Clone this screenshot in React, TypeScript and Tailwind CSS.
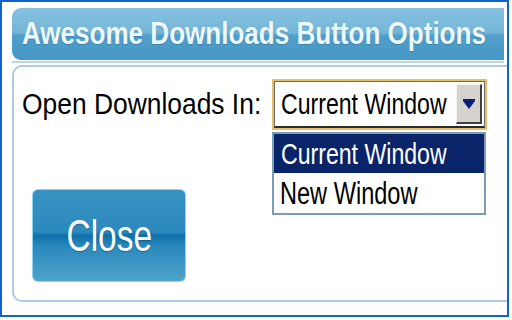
export default function App() {
  return (
    <div className="w-[512px] h-[320px] bg-white" style={{ fontFamily: '"Liberation Sans", Arial, sans-serif' }}>
      {/* window frame */}
      <div className="w-[509px] h-[317px] border-2 border-[#1162cc] overflow-hidden flex flex-col">
        {/* title bar */}
        <div className="mt-[6px] ml-[10px] w-[492px] h-[52px] shrink-0 rounded-l-[9px] flex items-center pl-[10px] bg-[linear-gradient(to_bottom,#86c2df_0%,#74b5d7_48%,#519fcb_52%,#4597c5_100%)]">
          <span className="inline-block origin-left scale-x-[0.84] whitespace-nowrap text-[31px] font-bold text-[#eef8fc] [text-shadow:0_1px_1px_rgba(20,80,120,0.35)]">
            Awesome Downloads Button Options
          </span>
        </div>
        <div className="mt-[1px] ml-[10px] w-[492px] h-[2px] shrink-0 bg-[#bdd7ea]" />

        {/* content panel */}
        <div className="mt-[2px] ml-[10px] w-[510px] h-[237px] shrink-0 rounded-[10px] border-2 border-[#aecbe4] bg-white pt-[12px] pl-[8px]">
          <div className="flex items-center h-[51px]">
            <div className="w-[250px] shrink-0 whitespace-nowrap">
              <span className="inline-block origin-left scale-x-[0.88] text-[30px] leading-none text-black">
                Open Downloads In:
              </span>
            </div>

            {/* select */}
            <div className="relative w-[215px] h-[51px] shrink-0 border-2 border-[#e5bd6b]">
              <div className="flex h-full border border-[#6b6b6b] border-b-2 border-b-[#2c2c2c] bg-white p-[2px]">
                <div className="flex-1 flex items-center pl-[4px] overflow-hidden whitespace-nowrap">
                  <span className="inline-block origin-left scale-x-[0.77] text-[30px] leading-none text-black">
                    Current Window
                  </span>
                </div>
                <div className="w-[26px] h-full flex items-center justify-center bg-[#d6d3ce] border-t border-l border-[#f4f3f0] border-b-2 border-r-2 border-b-[#404040] border-r-[#404040]">
                  <svg width="12" height="10" viewBox="0 0 12 10">
                    <path d="M0 0H12V2L6 10L0 2Z" fill="#0b1f78" />
                  </svg>
                </div>
              </div>

              {/* open list */}
              <div className="absolute left-[-2px] top-[51px] w-[214px] h-[83px] border-2 border-[#7d9ab6] bg-white flex flex-col">
                <div className="h-[39px] flex items-center pl-[7px] bg-[#0a246a] whitespace-nowrap">
                  <span className="inline-block origin-left scale-x-[0.77] text-[30px] leading-none text-white">
                    Current Window
                  </span>
                </div>
                <div className="h-[40px] flex items-center pl-[6px] whitespace-nowrap">
                  <span className="inline-block origin-left scale-x-[0.76] text-[31px] leading-none text-black">
                    New Window
                  </span>
                </div>
              </div>
            </div>
          </div>

          {/* close button */}
          <button className="mt-[59px] ml-[10px] w-[154px] h-[93px] rounded-[6px] border border-[#8fd3f0] flex items-center justify-center bg-[linear-gradient(to_bottom,#3793c2_0%,#2d89bc_46%,#0d70aa_50%,#2a88bc_62%,#4ea5cb_100%)]">
            <span className="inline-block scale-x-[0.76] text-[44px] leading-none text-white [text-shadow:0_1px_1px_rgba(0,50,90,0.4)]">
              Close
            </span>
          </button>
        </div>
      </div>
    </div>
  );
}
